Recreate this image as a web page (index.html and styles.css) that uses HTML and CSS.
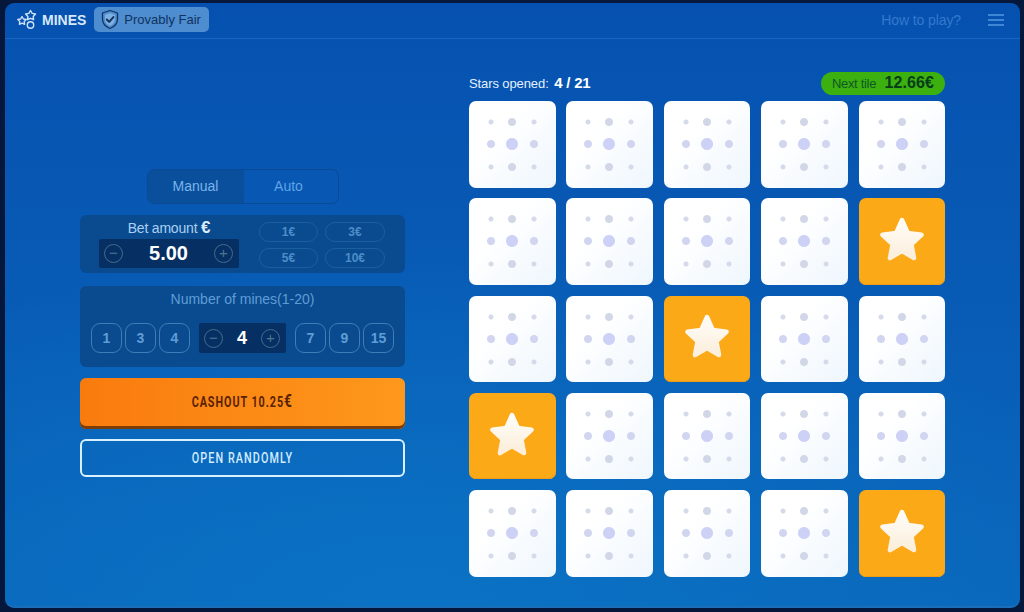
FILE: index.html
```html
<!DOCTYPE html>
<html>
<head>
  <title>Mines</title>
  <link rel="stylesheet" href="styles.css">
</head>
<body>
  <svg class="defs" width="0" height="0">
    <defs>
      <linearGradient id="starFill" x1="0" y1="0" x2="0" y2="1">
        <stop offset="0" stop-color="#fffdf8"/>
        <stop offset="1" stop-color="#fbeedb"/>
      </linearGradient>
      <symbol id="star" viewBox="0 0 48 48">
        <path d="M24 6l5.500 12.300 13.200 1.600-9.800 9.100 2.600 13.200L24 35.400l-11.500 6.800 2.600-13.200-9.800-9.100 13.200-1.600z" fill="url(#starFill)" stroke="url(#starFill)" stroke-width="4.500" stroke-linejoin="round"/>
      </symbol>
    </defs>
  </svg>

  <div class="app">
    <div class="header">
      <svg class="logo" width="22" height="21" viewBox="0 0 22 21" fill="none" stroke="#cfe4fb" stroke-width="1.400" stroke-linejoin="round">
        <path d="M14.500 1.500l1.700 2.900 3.300.6-2.300 2.400.4 3.300-3.100-1.400-3 1.400.4-3.300L9.600 5l3.300-.6z"/>
        <path d="M6 7.500l1.400 2.500 2.800.5-2 2 .4 2.800L6 14.100l-2.600 1.200.4-2.800-2-2 2.800-.5z"/>
        <circle cx="14.500" cy="16" r="3.200"/>
      </svg>
      <span class="title">MINES</span>
      <div class="fair">
        <svg width="20" height="21" viewBox="0 0 20 21" fill="none" stroke="#12335f" stroke-linejoin="round" stroke-linecap="round">
          <path d="M10 1.500l7.500 2.500v6c0 4.500-3.200 7.800-7.500 9.500-4.300-1.700-7.500-5-7.500-9.500V4z" stroke-width="1.300"/>
          <path d="M10 4.200l5 1.700v4.300c0 3.100-2.100 5.400-5 6.700-2.900-1.300-5-3.600-5-6.700V5.900z" fill="#7fb0e2" stroke="none"/>
          <path d="M6.800 10.500l2.400 2.400 4.200-4.800" stroke-width="2"/>
        </svg>
        <span>Provably Fair</span>
      </div>
      <a class="howto">How to play?</a>
      <div class="menu"><i></i><i></i><i></i></div>
    </div>

    <div class="main">
      <div class="controls">
        <div class="tabs">
          <div class="tab active">Manual</div>
          <div class="tab">Auto</div>
        </div>

        <div class="panel bet">
          <div class="betLeft">
            <p class="betLabel">Bet amount <b>€</b></p>
            <div class="stepper">
              <span class="round">−</span>
              <span class="amount">5.00</span>
              <span class="round">+</span>
            </div>
          </div>
          <div class="chips">
            <span class="chip">1€</span>
            <span class="chip">3€</span>
            <span class="chip">5€</span>
            <span class="chip">10€</span>
          </div>
        </div>

        <div class="panel mines">
          <p class="minesLabel">Number of mines(1-20)</p>
          <div class="minesRow">
            <div class="quick">
              <span class="num">1</span>
              <span class="num">3</span>
              <span class="num">4</span>
            </div>
            <div class="stepper small">
              <span class="round">−</span>
              <span class="amount">4</span>
              <span class="round">+</span>
            </div>
            <div class="quick">
              <span class="num">7</span>
              <span class="num">9</span>
              <span class="num">15</span>
            </div>
          </div>
        </div>

        <button class="cashout"><span>CASHOUT 10.25<em>€</em></span></button>
        <button class="random"><span>OPEN RANDOMLY</span></button>
      </div>

      <div class="game">
        <div class="gameTop">
          <p class="opened">Stars opened: <b>4 / 21</b></p>
          <p class="next">Next tile <b>12.66€</b></p>
        </div>
        <div class="grid">
          <div class="tile"></div>
          <div class="tile"></div>
          <div class="tile"></div>
          <div class="tile"></div>
          <div class="tile"></div>

          <div class="tile"></div>
          <div class="tile"></div>
          <div class="tile"></div>
          <div class="tile"></div>
          <div class="tile open"><svg><use href="#star"/></svg></div>

          <div class="tile"></div>
          <div class="tile"></div>
          <div class="tile open"><svg><use href="#star"/></svg></div>
          <div class="tile"></div>
          <div class="tile"></div>

          <div class="tile open"><svg><use href="#star"/></svg></div>
          <div class="tile"></div>
          <div class="tile"></div>
          <div class="tile"></div>
          <div class="tile"></div>

          <div class="tile"></div>
          <div class="tile"></div>
          <div class="tile"></div>
          <div class="tile"></div>
          <div class="tile open"><svg><use href="#star"/></svg></div>
        </div>
      </div>
    </div>
  </div>
</body>
</html>
```

FILE: styles.css
```css
html, body {
  height: 100%;
}

body {
  margin: 0;
  padding: 3px 4px 4px 5px;
  box-sizing: border-box;
  background: #05173a;
  font-family: "Liberation Sans", Arial, sans-serif;
  overflow: hidden;
}

p {
  margin: 0;
}

.defs {
  position: absolute;
}

.app {
  height: 100%;
  border-radius: 9px;
  background: radial-gradient(ellipse 75% 60% at 40% 100%, #0a72c4 0%, rgba(11, 110, 190, 0) 100%), linear-gradient(to bottom, #0651b0, #0a66ba);
  border-bottom: 2px solid #1a6fb8;
  box-sizing: border-box;
  display: flex;
  flex-direction: column;
}

/* header */
.header {
  height: 36px;
  box-sizing: border-box;
  flex-shrink: 0;
  display: flex;
  align-items: center;
  padding: 0 16px 2px 11px;
  border-bottom: 1px solid #1a65c0;
}

.logo {
  margin-right: 4px;
}

.title {
  color: #d6e8fb;
  font-size: 14px;
  font-weight: bold;
}

.fair {
  display: flex;
  align-items: center;
  gap: 4px;
  height: 25px;
  margin-left: 8px;
  padding: 0 8px 0 6px;
  border-radius: 5px;
  background: #4d8dd0;
  color: #10325f;
  font-size: 13px;
}

.howto {
  margin-left: auto;
  color: #3379cc;
  font-size: 14px;
  letter-spacing: -0.1px;
}

.menu {
  margin-left: 27px;
  width: 16px;
  display: flex;
  flex-direction: column;
  gap: 3px;
}

.menu i {
  height: 2px;
  background: #3f86d6;
}

/* main layout */
.main {
  flex: 1;
  display: flex;
  align-items: flex-start;
  padding: 33px 0 0 75px;
  gap: 64px;
}

.controls {
  width: 325px;
  margin-top: 97px;
  display: flex;
  flex-direction: column;
}

.tabs {
  align-self: center;
  width: 192px;
  height: 35px;
  box-sizing: border-box;
  display: flex;
  border: 1px solid #0a4a94;
  border-radius: 7px;
  overflow: hidden;
  margin-bottom: 11px;
}

.tab {
  flex: 1;
  display: flex;
  align-items: center;
  justify-content: center;
  color: #5fa3e6;
  font-size: 14px;
  padding-bottom: 2px;
}

.tab:last-child {
  padding-right: 4px;
}

.tab.active {
  flex: none;
  width: 96px;
  background: #0a4f9c;
  color: #79b4ea;
}

.panel {
  background: #0a4b8f;
  border-radius: 6px;
}

/* bet */
.bet {
  height: 58px;
  box-sizing: border-box;
  display: flex;
  padding: 0 20px 0 19px;
  margin-bottom: 13px;
}

.betLeft {
  width: 140px;
}

.betLabel {
  text-align: center;
  color: #a9d0f3;
  font-size: 14px;
  height: 24px;
  line-height: 25px;
  letter-spacing: -0.2px;
}

.betLabel b {
  font-size: 17px;
  color: #dcecfb;
}

.stepper {
  height: 29px;
  display: flex;
  align-items: center;
  justify-content: space-between;
  padding: 0 6px 0 5px;
  background: #062f63;
  border-radius: 2px;
}

.round {
  width: 19px;
  height: 19px;
  box-sizing: border-box;
  border: 1px solid #456b8c;
  border-radius: 50%;
  color: #4f7490;
  font-size: 15px;
  line-height: 16px;
  text-align: center;
}

.amount {
  color: #fff;
  font-size: 20px;
  font-weight: bold;
}

.chips {
  margin: 7px 0 0 20px;
  display: grid;
  grid-template-columns: 59px 60px;
  grid-auto-rows: 20px;
  gap: 6px 7px;
}

.chip {
  border: 1px solid #1a609f;
  border-radius: 10px;
  color: #4d8ec9;
  font-size: 12px;
  font-weight: bold;
  line-height: 18px;
  text-align: center;
}

/* mines */
.mines {
  height: 81px;
  box-sizing: border-box;
  padding: 5px 11px 0;
  margin-bottom: 11px;
}

.minesLabel {
  text-align: center;
  color: #5f9dd6;
  font-size: 14px;
  height: 32px;
  line-height: 17px;
}

.minesRow {
  display: flex;
  justify-content: space-between;
  align-items: center;
}

.quick {
  display: flex;
  gap: 3px;
}

.num {
  width: 31px;
  height: 30px;
  box-sizing: border-box;
  border: 1px solid #3d7eb8;
  border-radius: 9px;
  color: #5f9dd6;
  font-size: 14px;
  font-weight: bold;
  line-height: 28px;
  text-align: center;
}

.stepper.small {
  width: 87px;
  height: 30px;
  box-sizing: border-box;
}

.stepper.small .amount {
  font-size: 18px;
}

/* buttons */
button {
  display: block;
  width: 100%;
  border-radius: 6px;
  font-family: Roboto, "Liberation Sans", sans-serif;
  font-size: 15px;
  font-weight: bold;
  letter-spacing: 1.300px;
}

/* squeezed to get the tall narrow look of the button font */
button span {
  display: inline-block;
  white-space: nowrap;
  transform: scaleX(0.72);
}

button em {
  font-style: normal;
  font-size: 19px;
  line-height: 15px;
}

.cashout {
  height: 51px;
  border: 0;
  padding-bottom: 5px;
  background: linear-gradient(to right, #f97b0e, #fe981c);
  box-shadow: inset 0 -3px 0 #7c3d08;
  color: #5a2204;
  margin-bottom: 10px;
}

.random {
  height: 38px;
  border: 2px solid #d9f0ff;
  background: transparent;
  color: #d4ecff;
  font-weight: 500;
  letter-spacing: 1.500px;
}

/* game */
.game {
  width: 476px;
}

.gameTop {
  height: 29px;
  display: flex;
  justify-content: space-between;
  align-items: flex-start;
}

.opened {
  color: #e4f1fd;
  font-size: 13px;
  line-height: 22px;
  letter-spacing: -0.1px;
}

.opened b {
  color: #fff;
  font-size: 15px;
  margin-left: 2px;
  letter-spacing: -0.2px;
}

.next {
  height: 23px;
  line-height: 22px;
  padding: 0 11px;
  border-radius: 12px;
  background: #3bb00f;
  color: #0d5a25;
  font-size: 13px;
  letter-spacing: -0.3px;
}

.next b {
  color: #063d1c;
  font-size: 16px;
  margin-left: 5px;
  letter-spacing: 0.1px;
}

.grid {
  display: grid;
  grid-template-columns: repeat(5, 86.500px);
  grid-auto-rows: 86.500px;
  justify-content: space-between;
  row-gap: 10.800px;
}

.tile {
  border-radius: 7px;
  background:
    radial-gradient(circle at 22px 21px, #d5daea 2px, transparent 3px),
    radial-gradient(circle at 43px 21px, #d2d7e8 3.500px, transparent 4.500px),
    radial-gradient(circle at 65px 21px, #d5daea 2px, transparent 3px),
    radial-gradient(circle at 22px 43px, #d2d5f0 3.500px, transparent 4.500px),
    radial-gradient(circle at 43px 43px, #cdd1f6 5.500px, transparent 6.500px),
    radial-gradient(circle at 65px 43px, #d2d5f0 3.500px, transparent 4.500px),
    radial-gradient(circle at 22px 66px, #d5daea 2px, transparent 3px),
    radial-gradient(circle at 43px 66px, #d2d7e8 3.500px, transparent 4.500px),
    radial-gradient(circle at 65px 66px, #d5daea 2px, transparent 3px),
    linear-gradient(to bottom right, #ffffff 35%, #eef6fd);
}

.tile.open {
  background: #fca917;
  box-shadow: inset 0 -1px 0 #ee9c18;
  display: flex;
  align-items: center;
  justify-content: center;
}

.tile svg {
  width: 50px;
  height: 50px;
  margin-top: -5px;
}
```
